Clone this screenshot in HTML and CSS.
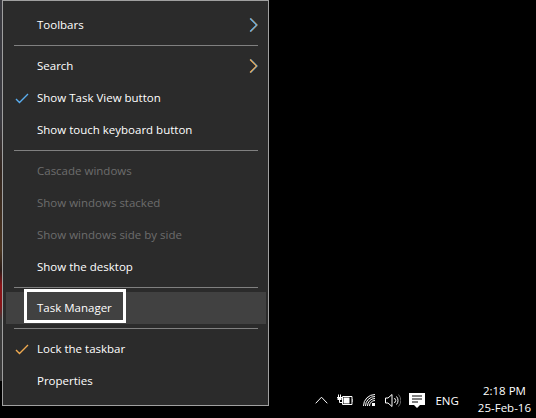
FILE: index.html
```html
<!DOCTYPE html>
<html lang="en">

<head>
    <meta charset="UTF-8" />
    <title>Taskbar menu</title>
    <link rel="stylesheet" href="styles.css">
</head>

<body>
    <div class="desktop">
        <div class="wallpaper"></div>
        <ul class="menu">
            <li class="menu-item">Toolbars
                <svg class="menu-arrow" viewBox="0 0 9 14">
                    <path class="warm" d="M1.600 .5 8.100 7 1.600 13.500" />
                    <path class="cool" d="M1 .5 7.500 7 1 13.500" />
                </svg>
            </li>
            <li class="menu-sep"></li>
            <li class="menu-item">Search
                <svg class="menu-arrow" viewBox="0 0 9 14">
                    <path class="cool" d="M1.600 .5 8.100 7 1.600 13.500" />
                    <path class="warm" d="M1 .5 7.500 7 1 13.500" />
                </svg>
            </li>
            <li class="menu-item">
                <svg class="menu-check" viewBox="0 0 14 11">
                    <path class="cool" d="M1 6 4.500 9.500 13 1" />
                </svg>
                Show Task View button
            </li>
            <li class="menu-item">Show touch keyboard button</li>
            <li class="menu-sep"></li>
            <li class="menu-item disabled">Cascade windows</li>
            <li class="menu-item disabled">Show windows stacked</li>
            <li class="menu-item disabled">Show windows side by side</li>
            <li class="menu-item">Show the desktop</li>
            <li class="menu-sep"></li>
            <li class="menu-item active">Task Manager
                <span class="menu-mark"></span>
            </li>
            <li class="menu-sep"></li>
            <li class="menu-item">
                <svg class="menu-check" viewBox="0 0 14 11">
                    <path class="warm" d="M1 6 4.500 9.500 13 1" />
                </svg>
                Lock the taskbar
            </li>
            <li class="menu-item">Properties</li>
        </ul>
        <div class="tray">
            <svg class="tray-chevron" viewBox="0 0 13 8"><path d="M.7 7.300 6.500 1.200l5.800 6.100" /></svg>
            <svg class="tray-power" viewBox="0 0 16 12">
                <path d="M5.500 2.500h9.500v8H5.500z" />
                <path class="fill" d="M6.500 3.500h6v6h-6z" />
                <path d="M0 3.500h5M1.500 .5v3M3.500 .5v3M2.500 6v2.500h3" />
                <path class="fill" d="M15.500 5H16v3h-.5z" />
                <path class="fill" d="M.5 3h4v3h-4z" />
            </svg>
            <svg class="tray-wifi" viewBox="0 0 12 12">
                <path d="M.5 12A11.500 11.500 0 0 1 12 .5M2.500 12A9.500 9.500 0 0 1 12 2.500M4.500 12A7.500 7.500 0 0 1 12 4.500M6.500 12A5.500 5.500 0 0 1 12 6.500" />
                <path class="fill" d="M9 9h3v3H9z" />
            </svg>
            <svg class="tray-sound" viewBox="0 0 16 13">
                <path d="M.5 4h2.500l4-3.500v12L3 9H.5z" />
                <path d="M9.500 4a3.500 3.500 0 0 1 0 5M11.500 2.500a6 6 0 0 1 0 8" />
                <path class="dim" d="M13.500 .5a9 9 0 0 1 0 12" />
            </svg>
            <svg class="tray-note" viewBox="0 0 16 15">
                <path class="fill" d="M0 0h16v12h-5l-3 3-3-3H0z" />
                <path class="cut" d="M3 3h10M3 6h10M3 9h6" />
            </svg>
            <span class="tray-lang">ENG</span>
            <div class="tray-clock">
                <span>2:18 PM</span>
                <span>25-Feb-16</span>
            </div>
        </div>
    </div>
</body>

</html>
```

FILE: styles.css
```css
* {
    margin: 0;
    padding: 0;
    box-sizing: border-box;
}

body {
    background: #000;
    font-family: "Open Sans", "Liberation Sans", sans-serif;
    font-size: 11.5px;
    color: #fff;
    overflow: hidden;
}

.desktop {
    display: flex;
    height: 418px;
    width: 536px;
    align-items: flex-start;
}

.wallpaper {
    width: 2px;
    height: 381px;
    flex-shrink: 0;
    background: linear-gradient(#3a3a40 0, #3a3a40 120px, #33261f 170px, #4a3520 250px, #2a1c18 270px, #8a1418 285px, #8a1418 305px, #3a3a3a 320px, #3a3a3a 381px);
}

.menu {
    list-style: none;
    width: 267px;
    height: 406px;
    flex-shrink: 0;
    padding: 8px 1px;
    background: #2b2b2b;
    border: 1px solid #a0a0a0;
}

.menu-item {
    position: relative;
    display: flex;
    align-items: center;
    height: 32px;
    padding-left: 33px;
    padding-bottom: 2px;
}

.menu-item.disabled {
    color: #6d6d6d;
}

.menu-item.active {
    background: #414141;
    margin: 0 1px 0 2px;
    padding-left: 31px;
}

.menu-sep {
    height: 1px;
    margin: 4px 9px 4px 10px;
    background: #808080;
}

.menu-arrow {
    position: absolute;
    right: 9px;
    top: 9px;
    width: 9px;
    height: 14px;
    fill: none;
    stroke-width: 1.100;
}

.menu-check {
    position: absolute;
    left: 11px;
    top: 11px;
    width: 14px;
    height: 11px;
    fill: none;
    stroke-width: 1.400;
}

.cool {
    stroke: #5aaef0;
}

.warm {
    stroke: #f0aa50;
}

.menu-mark {
    position: absolute;
    left: 18px;
    top: -3px;
    width: 102px;
    height: 34px;
    border: 3px solid #fff;
}

.tray {
    display: flex;
    align-items: center;
    align-self: flex-end;
    margin-left: auto;
    height: 36px;
    padding-right: 5px;
}

.tray svg {
    fill: none;
    stroke: #fff;
    stroke-width: 1;
    flex-shrink: 0;
}

.tray svg .fill {
    fill: #fff;
    stroke: none;
}

.tray svg .dim {
    stroke: #666;
}

.tray svg .cut {
    stroke: #000;
    stroke-width: 1.200;
}

.tray-chevron {
    width: 13px;
    height: 8px;
    margin-right: 9px;
}

.tray-power {
    width: 16px;
    height: 12px;
    margin-right: 10px;
}

.tray-wifi {
    width: 12px;
    height: 12px;
    margin-right: 10px;
}

.tray-sound {
    width: 16px;
    height: 13px;
    margin-right: 8px;
}

.tray-note {
    width: 16px;
    height: 15px;
    margin-right: 10px;
}

.tray-lang {
    margin-right: 19px;
}

.tray-clock {
    display: flex;
    flex-direction: column;
    align-items: center;
    line-height: 17px;
    padding-bottom: 2px;
}
```
